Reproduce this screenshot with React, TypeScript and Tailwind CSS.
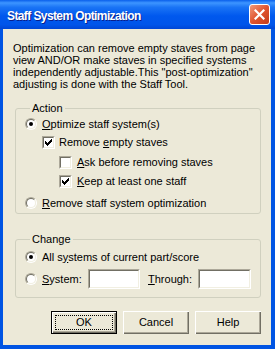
import React from "react";

const font = { fontFamily: '"Liberation Sans", Arial, sans-serif' };

const Radio = ({ checked }: { checked?: boolean }) => (
  <span className="w-[12px] h-[12px] rounded-full border border-t-[#aca899] border-l-[#aca899] border-b-white border-r-white flex shrink-0">
    <span className="flex-1 rounded-full border border-t-[#716f64] border-l-[#716f64] border-b-[#f1efe2] border-r-[#f1efe2] bg-white flex items-center justify-center">
      {checked && <span className="w-[4px] h-[4px] rounded-full bg-black" />}
    </span>
  </span>
);

const Check = ({ checked }: { checked?: boolean }) => (
  <span className="w-[13px] h-[13px] border border-t-[#aca899] border-l-[#aca899] border-b-white border-r-white flex shrink-0">
    <span className="flex-1 border border-t-[#716f64] border-l-[#716f64] border-b-[#f1efe2] border-r-[#f1efe2] bg-white flex items-center justify-center">
      {checked && (
        <svg width="7" height="7" viewBox="0 0 7 7">
          <path d="M0 2h1v1h1v1h1V3h1V2h1V1h1V0h1v3h-1v1h-1v1h-1v1h-1v1H2V6H1V5H0z" fill="#000" />
        </svg>
      )}
    </span>
  </span>
);

const Edit = ({ w }: { w: string }) => (
  <span className={`${w} h-[20px] border border-t-[#aca899] border-l-[#aca899] border-b-white border-r-white flex`}>
    <span className="flex-1 border border-t-[#716f64] border-l-[#716f64] border-b-[#f1efe2] border-r-[#f1efe2] bg-white" />
  </span>
);

const Btn = ({ label, def }: { label: string; def?: boolean }) => (
  <button
    className={
      "w-[66px] h-[23px] bg-[#ece9d8] text-[11px] text-black flex items-center justify-center " +
      (def
        ? "border border-black shadow-[inset_1px_1px_#fff,inset_-1px_-1px_#716f64,inset_-2px_-2px_#aca899]"
        : "shadow-[inset_1px_1px_#fff,inset_-1px_-1px_#716f64,inset_-2px_-2px_#aca899]")
    }
  >
    {def ? (
      <span className="w-[58px] h-[15px] border border-dotted border-black flex items-center justify-center">{label}</span>
    ) : (
      label
    )}
  </button>
);

export default function App() {
  return (
    <div style={font} className="w-[275px] h-[349px] flex flex-col bg-[#0054e3] text-[11px] text-black">
      <div className="h-[29px] shrink-0 flex items-center pl-[7px] pr-[5px] bg-[linear-gradient(#0a5feb_0%,#3d95ff_10%,#1a74f5_25%,#0058ee_55%,#0055ea_85%,#0046d5_100%)]">
        <span className="flex-1 text-white font-bold text-[12px] tracking-[-0.6px] pt-[2px] [text-shadow:1px_1px_#0a1e8a]">
          Staff System Optimization
        </span>
        <span className="w-[21px] h-[21px] rounded-[3px] border border-white bg-[linear-gradient(135deg,#f19a7c,#e0542f_50%,#c33b1a)] flex items-center justify-center">
          <svg width="11" height="11" viewBox="0 0 11 11">
            <path d="M1.5 1.5l8 8M9.5 1.5l-8 8" stroke="#fff" strokeWidth="2.2" strokeLinecap="square" />
          </svg>
        </span>
      </div>
      <div className="flex-1 ml-[3px] mr-[4px] mb-[4px] bg-[#ece9d8] flex flex-col pt-[13px]">
        <p className="pl-[10px] pr-[8px] leading-[12px]">
          Optimization can remove empty staves from page view AND/OR make staves in specified systems independently adjustable.This "post-optimization" adjusting is done with the Staff Tool.
        </p>
        <fieldset className="ml-[12px] mr-[10px] mt-[12px] h-[112px] border border-[#d0d0bf] rounded-[3px] pl-[9px]">
          <legend className="ml-[5px] px-[2px] leading-[13px]">Action</legend>
          <div className="flex flex-col mt-[1px]">
            <div className="h-[16px] flex items-center gap-[5px]">
              <Radio checked />
              <span><u>O</u>ptimize staff system(s)</span>
            </div>
            <div className="h-[16px] flex items-center gap-[4px] mt-[2px] ml-[17px]">
              <Check checked />
              <span>Remove <u>e</u>mpty staves</span>
            </div>
            <div className="h-[16px] flex items-center gap-[5px] mt-[4px] ml-[34px]">
              <Check />
              <span><u>A</u>sk before removing staves</span>
            </div>
            <div className="h-[16px] flex items-center gap-[5px] mt-[3px] ml-[34px]">
              <Check checked />
              <span><u>K</u>eep at least one staff</span>
            </div>
            <div className="h-[16px] flex items-center gap-[5px] mt-[6px]">
              <Radio />
              <span><u>R</u>emove staff system optimization</span>
            </div>
          </div>
        </fieldset>
        <fieldset className="ml-[12px] mr-[10px] mt-[19px] h-[65px] border border-[#d0d0bf] rounded-[3px] pl-[9px]">
          <legend className="ml-[5px] px-[2px] leading-[13px]">Change</legend>
          <div className="flex flex-col mt-[3px]">
            <div className="h-[16px] flex items-center gap-[5px]">
              <Radio checked />
              <span>All s<u>y</u>stems of current part/score</span>
            </div>
            <div className="h-[20px] flex items-center mt-[4px]">
              <Radio />
              <span className="ml-[5px] w-[46px]"><u>S</u>ystem:</span>
              <Edit w="w-[52px]" />
              <span className="ml-[8px] w-[50px]"><u>T</u>hrough:</span>
              <Edit w="w-[53px]" />
            </div>
          </div>
        </fieldset>
        <div className="flex justify-end gap-[6px] mt-[13px] mr-[10px]">
          <Btn label="OK" def />
          <Btn label="Cancel" />
          <Btn label="Help" />
        </div>
      </div>
    </div>
  );
}
